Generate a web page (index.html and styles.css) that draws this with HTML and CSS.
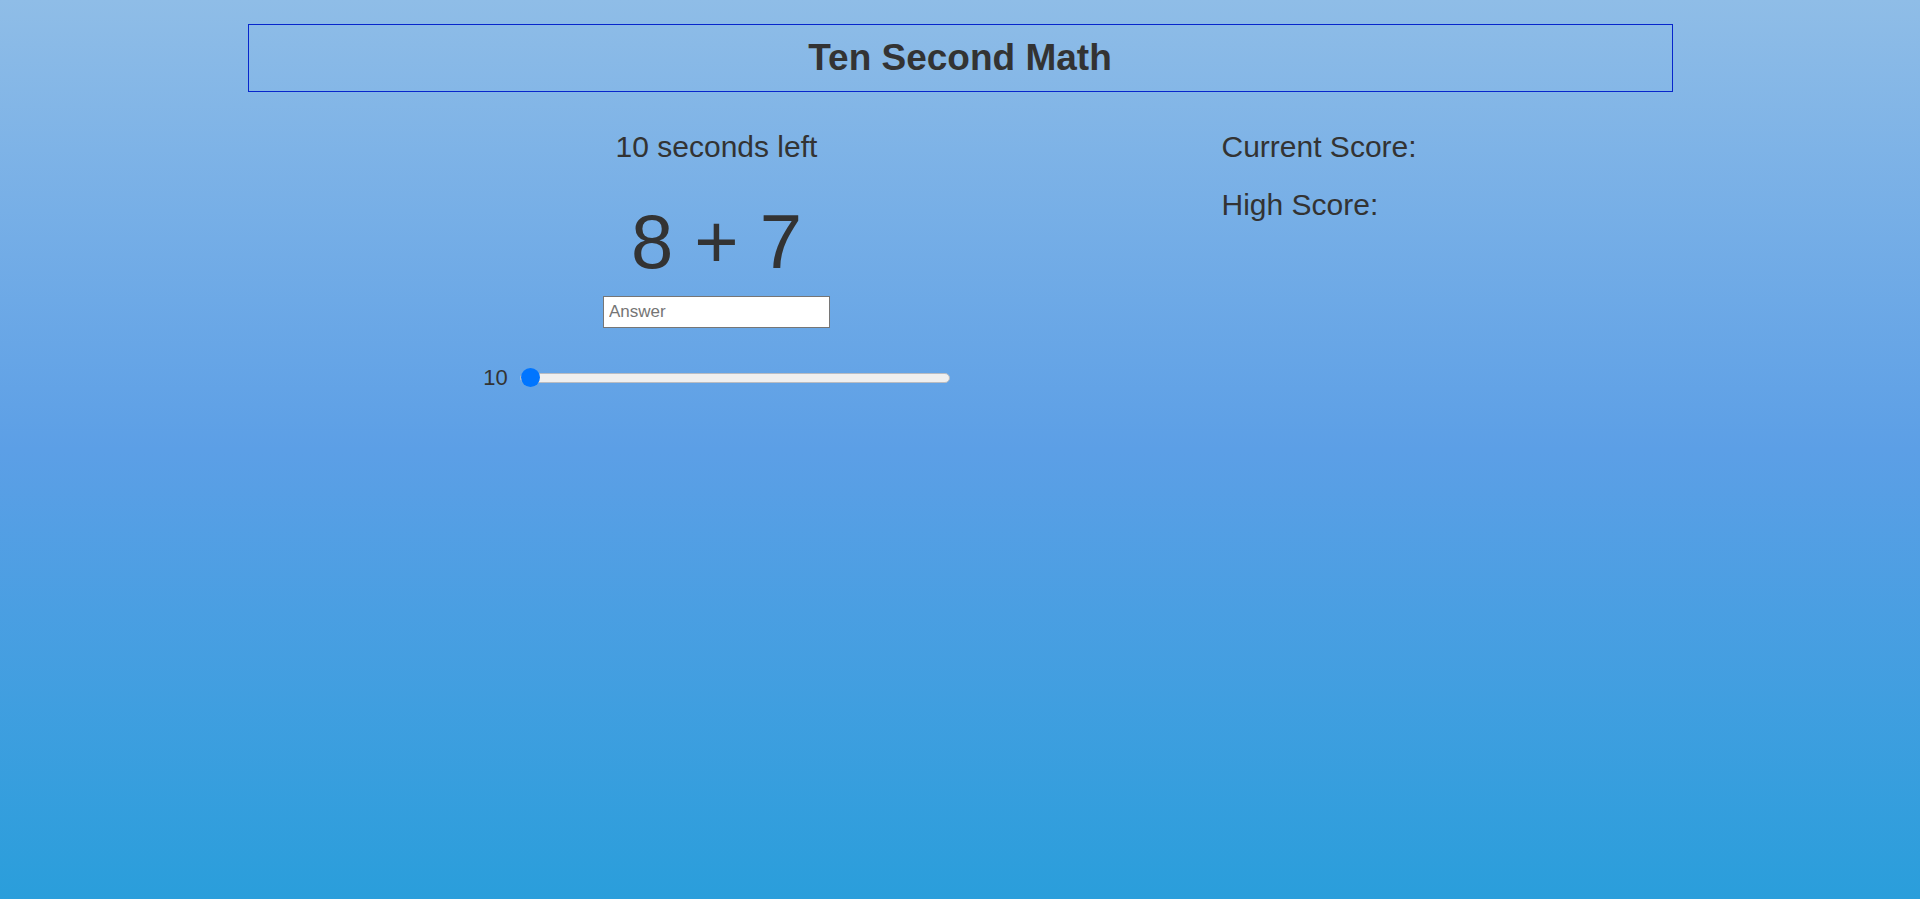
FILE: index.html
```html
<!DOCTYPE html>
<html lang="en">
<head>
<meta charset="utf-8">
<title>Ten Second Math</title>
<link rel="stylesheet" href="styles.css">
</head>
<body>
<div class="page">
  <header class="title-box">
    <h1 class="title">Ten Second Math</h1>
  </header>
  <main class="game">
    <section class="play">
      <p class="timer">10 seconds left</p>
      <p class="problem">8 + 7</p>
      <input class="answer" type="text" placeholder="Answer">
      <div class="time-row">
        <span class="time-label">10</span>
        <input class="time-range" type="range" min="10" max="60" value="10">
      </div>
    </section>
    <section class="scores">
      <p class="score">Current Score:</p>
      <p class="score score-high">High Score:</p>
    </section>
  </main>
</div>
</body>
</html>
```
FILE: styles.css
```css
html, body {
  margin: 0;
  padding: 0;
}

body {
  min-height: 100vh;
  background: linear-gradient(to bottom, #8fbde7 0%, #5c9fe6 50%, #2a9edb 100%);
  font-family: "Liberation Sans", Arial, sans-serif;
  color: #333;
}

.page {
  width: 1425px;
  margin: 0 auto;
  padding-top: 24px;
}

.title-box {
  height: 68px;
  box-sizing: border-box;
  border: 1px solid #0726cc;
}

.title {
  margin: 0;
  font-size: 37px;
  line-height: 66px;
  font-weight: bold;
  text-align: center;
}

.game {
  display: flex;
  margin-top: 38px;
}

.play {
  width: 488px;
  margin-left: 225px;
  display: flex;
  flex-direction: column;
  align-items: center;
}

.timer {
  margin: 0;
  font-size: 30px;
  line-height: 34px;
}

.problem {
  margin: 35px 0 0;
  font-size: 76px;
  line-height: 86px;
}

.answer {
  margin: 11px 0 0;
  width: 227px;
  height: 32px;
  box-sizing: border-box;
  border: 1px solid #767676;
  padding: 0 5px;
  background: #fff;
  font-family: "Liberation Sans", Arial, sans-serif;
  font-size: 17px;
  color: #333;
  border-radius: 0;
}

.answer::placeholder {
  color: #757575;
}

.time-row {
  margin-top: 37px;
  display: flex;
  align-items: center;
  gap: 12px;
  height: 25px;
}

.time-label {
  font-size: 22px;
  line-height: 25px;
}

.time-range {
  -webkit-appearance: none;
  appearance: none;
  width: 430px;
  height: 19px;
  margin: 0;
  padding: 0;
  background: transparent;
}

.time-range::-webkit-slider-runnable-track {
  height: 10px;
  box-sizing: border-box;
  background: #efefef;
  border: 1px solid #b9bcc2;
  border-radius: 5px;
}

.time-range::-webkit-slider-thumb {
  -webkit-appearance: none;
  appearance: none;
  width: 19px;
  height: 19px;
  margin-top: -5.5px;
  border: none;
  border-radius: 50%;
  background: #0075ff;
}

.scores {
  margin-left: 261px;
}

.score {
  margin: 0;
  font-size: 30px;
  line-height: 34px;
}

.score-high {
  margin-top: 24px;
}
```
